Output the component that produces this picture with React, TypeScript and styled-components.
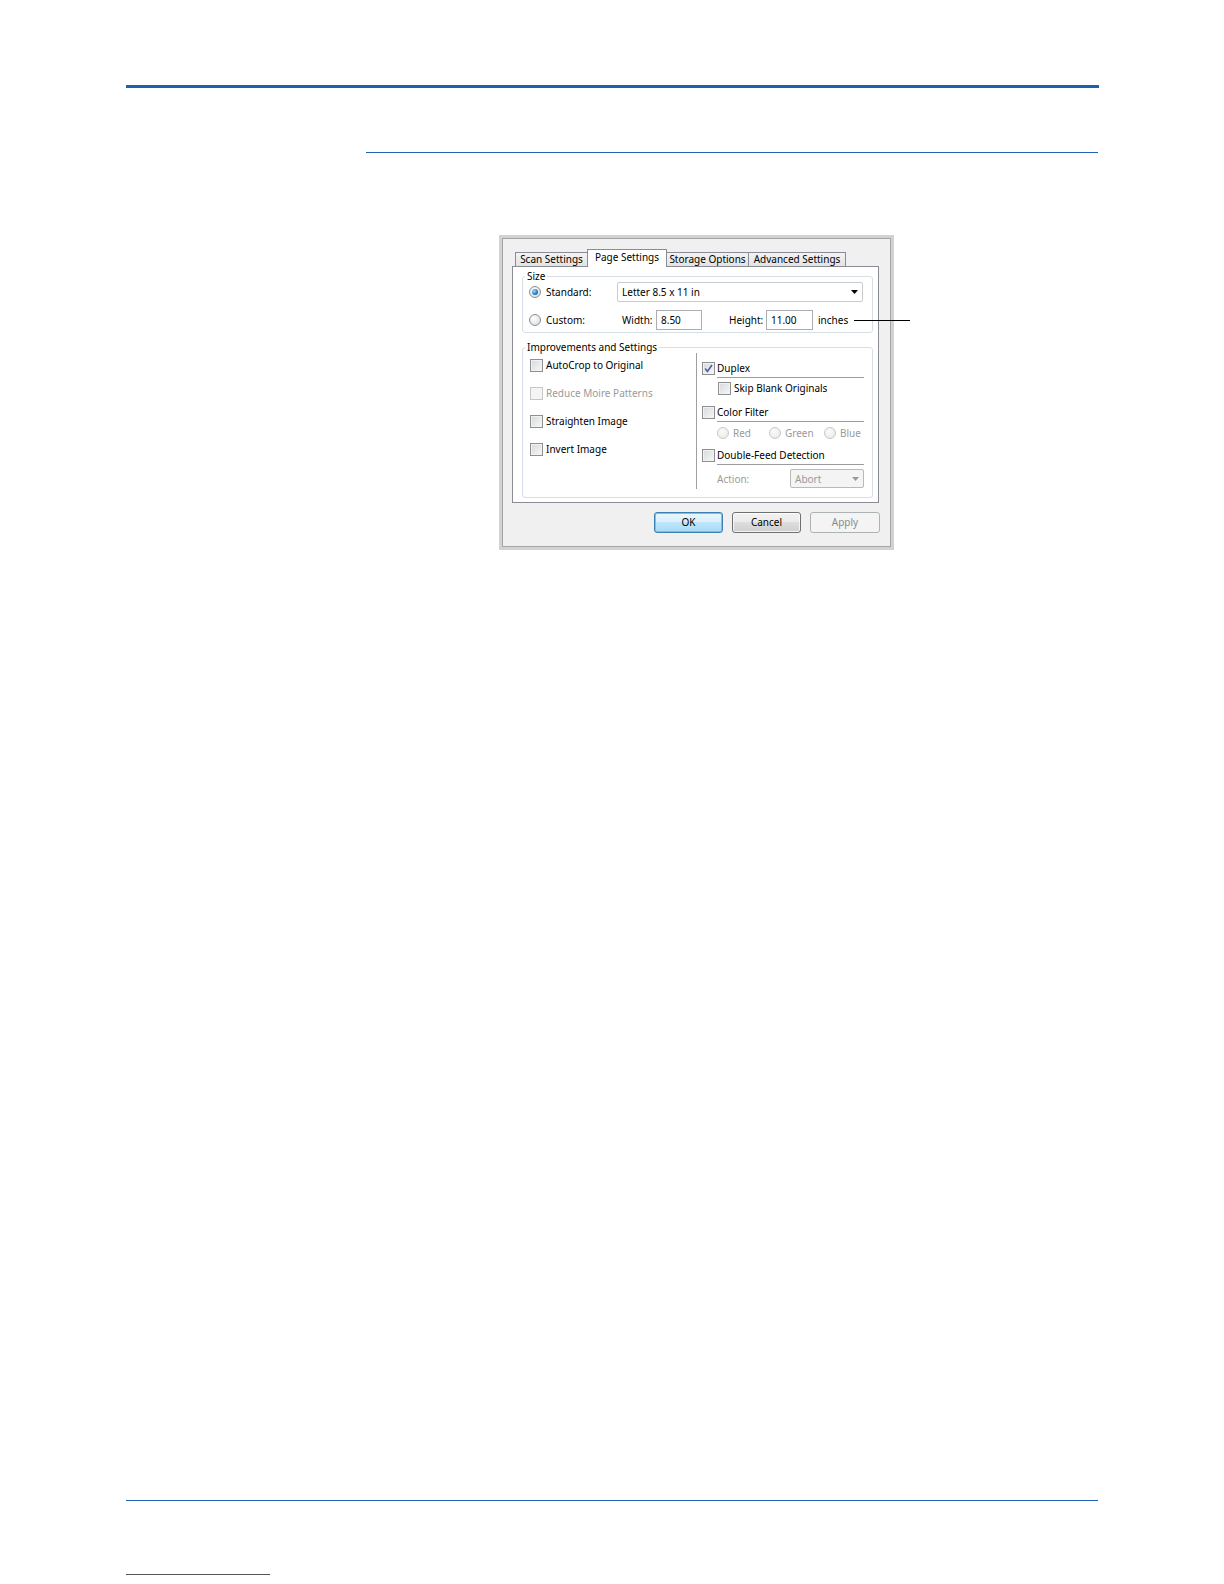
import React from "react";
import styled, { createGlobalStyle, css } from "styled-components";

const GlobalStyle = createGlobalStyle`
  html, body {
    margin: 0;
    padding: 0;
    background: #ffffff;
  }
  body {
    font-family: "Noto Sans", "Liberation Sans", sans-serif;
  }
  * {
    box-sizing: border-box;
  }
`;

const Page = styled.div`
  width: 1224px;
  height: 1584px;
  padding-top: 85px;
  display: flex;
  flex-direction: column;
  overflow: hidden;
`;

const Rule = styled.div<{ $top: number; $left: number; $width: number; $size?: number; $color?: string }>`
  flex: none;
  margin-top: ${(p) => p.$top}px;
  margin-left: ${(p) => p.$left}px;
  width: ${(p) => p.$width}px;
  height: ${(p) => p.$size ?? 1}px;
  background: ${(p) => p.$color ?? "#2463b3"};
`;

const Figure = styled.div`
  position: relative;
  flex: none;
  margin-top: 82px;
  margin-left: 499px;
  width: 395px;
`;

const Callout = styled.div`
  position: absolute;
  left: 355px;
  top: 85px;
  width: 56px;
  height: 1px;
  background: #000;
`;

/* dialog frame */

const Dialog = styled.div`
  width: 395px;
  height: 315px;
  border: 3px solid #d2d2d2;
  box-shadow: inset 0 0 0 1px #a4a4a4;
  background: #f0f0f0;
  padding: 11px 11px 13px 10px;
  display: flex;
  flex-direction: column;
  font-family: "Noto Sans", "Liberation Sans", sans-serif;
  font-size: 10px;
  color: #000;
`;

const TabStrip = styled.div`
  position: relative;
  z-index: 1;
  display: flex;
  align-items: flex-end;
  height: 17px;
  padding-left: 3px;
`;

const Tab = styled.div<{ $width: number; $active?: boolean }>`
  width: ${(p) => p.$width}px;
  height: 14px;
  margin-right: -1px;
  border: 1px solid #898c95;
  border-bottom: none;
  background: linear-gradient(#f3f3f3, #e3e3e3);
  text-align: center;
  line-height: 13px;
  white-space: nowrap;

  ${(p) =>
    p.$active &&
    css`
      position: relative;
      z-index: 2;
      height: 18px;
      margin-bottom: -1px;
      background: #ffffff;
      line-height: 14px;
    `}
`;

const Panel = styled.div`
  width: 367px;
  height: 237px;
  border: 1px solid #898c95;
  background: #ffffff;
  padding: 3px 0 0 9px;
  display: flex;
  flex-direction: column;
`;

const Group = styled.fieldset<{ $height: number; $gap?: number }>`
  margin: ${(p) => p.$gap ?? 0}px 0 0 0;
  width: 351px;
  height: ${(p) => p.$height}px;
  min-width: 0;
  border: 1px solid #d5dfe5;
  border-radius: 3px;
  padding: 0;
`;

const Legend = styled.legend`
  margin-left: 2px;
  padding: 0 2px;
  line-height: 12px;
  font-size: 10px;
`;

/* size group */

const SizeBody = styled.div`
  display: flex;
  flex-direction: column;
  gap: 8px;
  padding: 0 9px 2px 6px;
`;

const SizeRow = styled.div`
  display: flex;
  align-items: center;
  height: 20px;
`;

const RadioChoice = styled.label`
  display: flex;
  align-items: center;
  width: 88px;
  gap: 5px;
`;

const Radio = styled.span<{ $checked?: boolean; $disabled?: boolean }>`
  flex: none;
  position: relative;
  width: 12px;
  height: 12px;
  border-radius: 50%;
  border: 1px solid ${(p) => (p.$disabled ? "#c9c9c9" : "#8d8f91")};
  background: ${(p) =>
    p.$disabled
      ? "radial-gradient(circle at 40% 35%, #fbfbfb, #e6e6e6)"
      : "radial-gradient(circle at 40% 35%, #ffffff, #d3d6da)"};

  ${(p) =>
    p.$checked &&
    css`
      &::after {
        content: "";
        position: absolute;
        left: 2px;
        top: 2px;
        width: 6px;
        height: 6px;
        border-radius: 50%;
        background: radial-gradient(circle at 35% 35%, #9fdcff, #2a7fd0 55%, #0f4286);
      }
    `}
`;

const Select = styled.div<{ $disabled?: boolean; $width?: number }>`
  display: flex;
  align-items: center;
  justify-content: space-between;
  height: ${(p) => (p.$disabled ? 19 : 20)}px;
  ${(p) => (p.$width ? `width: ${p.$width}px;` : "flex: 1;")}
  padding: 0 4px 0 4px;
  border: 1px solid ${(p) => (p.$disabled ? "#b9b9b9" : "#cbcbcb")};
  border-radius: 2px;
  background: ${(p) => (p.$disabled ? "#f4f4f4" : "#ffffff")};
  color: ${(p) => (p.$disabled ? "#9a9a9a" : "#000")};
  white-space: nowrap;

  svg {
    flex: none;
  }
`;

const FieldLabel = styled.span<{ $width: number; $gap: number }>`
  width: ${(p) => p.$width}px;
  margin-left: ${(p) => p.$gap}px;
  white-space: nowrap;
`;

const Input = styled.div<{ $width: number }>`
  width: ${(p) => p.$width}px;
  height: 20px;
  border: 1px solid #abadb3;
  background: #fff;
  padding-left: 4px;
  line-height: 18px;
`;

const Unit = styled.span`
  margin-left: 5px;
`;

/* improvements group */

const ImproveBody = styled.div`
  display: grid;
  grid-template-columns: 173px 1px 1fr;
  height: 143px;
  padding-right: 8px;
`;

const LeftColumn = styled.div`
  display: flex;
  flex-direction: column;
  gap: 12px;
  padding: 4px 0 0 7px;
`;

const Divider = styled.div`
  margin-bottom: 7px;
  background: #a0a0a0;
`;

const RightColumn = styled.div`
  display: flex;
  flex-direction: column;
  padding: 7px 0 0 5px;
`;

const CheckRow = styled.label<{ $disabled?: boolean; $indent?: number; $gap?: number }>`
  display: flex;
  align-items: center;
  gap: 3px;
  height: 16px;
  margin-top: ${(p) => p.$gap ?? 0}px;
  padding-left: ${(p) => p.$indent ?? 0}px;
  color: ${(p) => (p.$disabled ? "#9a9a9a" : "#000")};
  white-space: nowrap;
`;

const Box = styled.span<{ $disabled?: boolean }>`
  flex: none;
  display: flex;
  align-items: center;
  justify-content: center;
  width: 13px;
  height: 13px;
  border: 1px solid ${(p) => (p.$disabled ? "#c6c6c6" : "#8e8f8f")};
  background: ${(p) =>
    p.$disabled ? "#f5f5f5" : "linear-gradient(135deg, #d6d9dd, #f7f7f7)"};
  box-shadow: inset 0 0 0 1px ${(p) => (p.$disabled ? "#f5f5f5" : "#f2f2f2")};
`;

const Heading = styled.div<{ $gap?: number }>`
  display: flex;
  align-items: flex-start;
  margin-top: ${(p) => p.$gap ?? 0}px;

  ${Box} {
    margin-top: 2px;
  }
`;

const HeadLabel = styled.span`
  flex: 1;
  margin-left: 2px;
  line-height: 16px;
  padding-bottom: 1px;
  border-bottom: 1px solid #9c9c9c;
  white-space: nowrap;
`;

const RadioRow = styled.div`
  display: flex;
  align-items: center;
  height: 16px;
  margin-top: 3px;
  padding-left: 15px;
  color: #9a9a9a;
`;

const RadioItem = styled.label<{ $width?: number }>`
  display: flex;
  align-items: center;
  gap: 4px;
  ${(p) => (p.$width ? `width: ${p.$width}px;` : "")}
`;

const ActionRow = styled.div`
  display: flex;
  align-items: center;
  justify-content: space-between;
  margin-top: 4px;
  padding-left: 15px;
  color: #9a9a9a;
`;

/* buttons */

const ButtonRow = styled.div`
  display: flex;
  justify-content: flex-end;
  gap: 9px;
  margin-top: 9px;
`;

const Button = styled.div<{ $width: number; $variant?: "default" | "disabled" }>`
  width: ${(p) => p.$width}px;
  height: 21px;
  border: 1px solid #707070;
  border-radius: 3px;
  background: linear-gradient(#f2f2f2 0%, #ebebeb 45%, #dddddd 50%, #cfcfcf 100%);
  box-shadow: inset 0 0 0 1px rgba(255, 255, 255, 0.75);
  text-align: center;
  line-height: 19px;

  ${(p) =>
    p.$variant === "default" &&
    css`
      border-color: #3c7fb1;
      background: linear-gradient(#eaf6fd 0%, #d9f0fc 45%, #bee6fd 50%, #a7d9f5 100%);
      box-shadow: inset 0 0 0 1px #66c9f0;
    `}

  ${(p) =>
    p.$variant === "disabled" &&
    css`
      border-color: #adb2b5;
      background: #f4f4f4;
      box-shadow: none;
      color: #8a8a8a;
    `}
`;

const Caret = ({ color }: { color: string }) => (
  <svg width="7" height="4" viewBox="0 0 7 4">
    <polygon points="0,0 7,0 3.5,4" fill={color} />
  </svg>
);

const Check = () => (
  <svg width="9" height="9" viewBox="0 0 9 9">
    <path d="M1.2 4.6 L3.4 7.4 L8 1" fill="none" stroke="#4a5ea8" strokeWidth="1.6" />
  </svg>
);

const leftOptions = [
  { label: "AutoCrop to Original" },
  { label: "Reduce Moire Patterns", disabled: true },
  { label: "Straighten Image" },
  { label: "Invert Image" },
];

export default function App() {
  return (
    <>
      <GlobalStyle />
      <Page>
        <Rule $top={0} $left={126} $width={973} $size={3} $color="#1d5fb1" />
        <Rule $top={64} $left={366} $width={732} />

        <Figure>
          <Dialog>
            <TabStrip>
              <Tab $width={73}>Scan Settings</Tab>
              <Tab $width={80} $active>
                Page Settings
              </Tab>
              <Tab $width={83}>Storage Options</Tab>
              <Tab $width={98}>Advanced Settings</Tab>
            </TabStrip>

            <Panel>
              <Group $height={63}>
                <Legend>Size</Legend>
                <SizeBody>
                  <SizeRow>
                    <RadioChoice>
                      <Radio $checked />
                      Standard:
                    </RadioChoice>
                    <Select>
                      Letter 8.5 x 11 in
                      <Caret color="#000" />
                    </Select>
                  </SizeRow>
                  <SizeRow>
                    <RadioChoice>
                      <Radio />
                      Custom:
                    </RadioChoice>
                    <FieldLabel $width={34} $gap={5}>
                      Width:
                    </FieldLabel>
                    <Input $width={46}>8.50</Input>
                    <FieldLabel $width={37} $gap={27}>
                      Height:
                    </FieldLabel>
                    <Input $width={47}>11.00</Input>
                    <Unit>inches</Unit>
                  </SizeRow>
                </SizeBody>
              </Group>

              <Group $height={157} $gap={8}>
                <Legend>Improvements and Settings</Legend>
                <ImproveBody>
                  <LeftColumn>
                    {leftOptions.map((o) => (
                      <CheckRow key={o.label} $disabled={o.disabled}>
                        <Box $disabled={o.disabled} />
                        {o.label}
                      </CheckRow>
                    ))}
                  </LeftColumn>

                  <Divider />

                  <RightColumn>
                    <Heading>
                      <Box>
                        <Check />
                      </Box>
                      <HeadLabel>Duplex</HeadLabel>
                    </Heading>
                    <CheckRow $indent={16} $gap={2}>
                      <Box />
                      Skip Blank Originals
                    </CheckRow>

                    <Heading $gap={8}>
                      <Box />
                      <HeadLabel>Color Filter</HeadLabel>
                    </Heading>
                    <RadioRow>
                      <RadioItem $width={52}>
                        <Radio $disabled />
                        Red
                      </RadioItem>
                      <RadioItem $width={55}>
                        <Radio $disabled />
                        Green
                      </RadioItem>
                      <RadioItem>
                        <Radio $disabled />
                        Blue
                      </RadioItem>
                    </RadioRow>

                    <Heading $gap={6}>
                      <Box />
                      <HeadLabel>Double-Feed Detection</HeadLabel>
                    </Heading>
                    <ActionRow>
                      Action:
                      <Select $disabled $width={74}>
                        Abort
                        <Caret color="#9a9a9a" />
                      </Select>
                    </ActionRow>
                  </RightColumn>
                </ImproveBody>
              </Group>
            </Panel>

            <ButtonRow>
              <Button $width={69} $variant="default">
                OK
              </Button>
              <Button $width={69}>Cancel</Button>
              <Button $width={70} $variant="disabled">
                Apply
              </Button>
            </ButtonRow>
          </Dialog>
          <Callout />
        </Figure>

        <Rule $top={950} $left={126} $width={972} />
        <Rule $top={73} $left={126} $width={144} $color="#555555" />
      </Page>
    </>
  );
}
